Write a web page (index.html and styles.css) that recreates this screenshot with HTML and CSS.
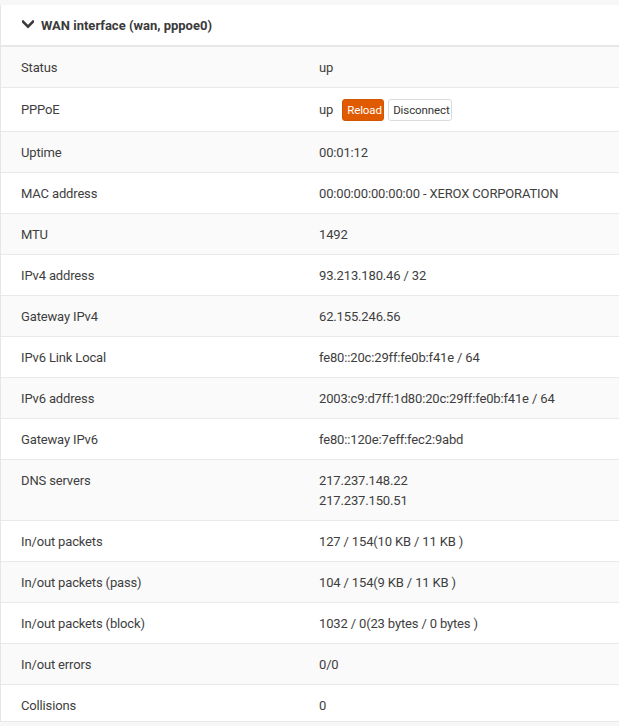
FILE: index.html
```html
<!DOCTYPE html>
<html>
<head>
<meta charset="utf-8">
<link rel="stylesheet" href="styles.css">
</head>
<body>
<section class="card">
  <header class="card-head">
    <svg class="chev" width="12" height="9" viewBox="0 0 12 9"><path d="M1 1.6 L6 6.6 L11 1.6" fill="none" stroke="#3b3b3b" stroke-width="2.6" stroke-linecap="square"/></svg>
    <span class="title">WAN interface (wan, pppoe0)</span>
  </header>
  <div class="rows">
    <div class="row"><div class="lbl">Status</div><div class="val">up</div></div>
    <div class="row row-btn"><div class="lbl">PPPoE</div><div class="val val-btn">up <span class="btns"><button class="btn btn-primary">Reload</button><button class="btn btn-default">Disconnect</button></span></div></div>
    <div class="row"><div class="lbl">Uptime</div><div class="val">00:01:12</div></div>
    <div class="row"><div class="lbl">MAC address</div><div class="val">00:00:00:00:00:00 - XEROX CORPORATION</div></div>
    <div class="row"><div class="lbl">MTU</div><div class="val">1492</div></div>
    <div class="row"><div class="lbl">IPv4 address</div><div class="val">93.213.180.46 / 32</div></div>
    <div class="row"><div class="lbl">Gateway IPv4</div><div class="val">62.155.246.56</div></div>
    <div class="row"><div class="lbl">IPv6 Link Local</div><div class="val">fe80::20c:29ff:fe0b:f41e / 64</div></div>
    <div class="row"><div class="lbl">IPv6 address</div><div class="val">2003:c9:d7ff:1d80:20c:29ff:fe0b:f41e / 64</div></div>
    <div class="row"><div class="lbl">Gateway IPv6</div><div class="val">fe80::120e:7eff:fec2:9abd</div></div>
    <div class="row"><div class="lbl">DNS servers</div><div class="val">217.237.148.22<br>217.237.150.51</div></div>
    <div class="row"><div class="lbl">In/out packets</div><div class="val">127 / 154(10 KB / 11 KB )</div></div>
    <div class="row"><div class="lbl">In/out packets (pass)</div><div class="val">104 / 154(9 KB / 11 KB )</div></div>
    <div class="row"><div class="lbl">In/out packets (block)</div><div class="val">1032 / 0(23 bytes / 0 bytes )</div></div>
    <div class="row"><div class="lbl">In/out errors</div><div class="val">0/0</div></div>
    <div class="row row-last"><div class="lbl">Collisions</div><div class="val">0</div></div>
  </div>
</section>
</body>
</html>
```
FILE: styles.css
```css
html, body {
  margin: 0;
  padding: 0;
  background: #f7f7f7;
}
body {
  padding-top: 5px;
  font-family: Roboto, "Liberation Sans", sans-serif;
  font-size: 13px;
  letter-spacing: -0.15px;
  color: #3e3e3e;
}
.card {
  background: #fff;
  border-left: 1px solid #e6e6e6;
}
.card-head {
  height: 40px;
  display: flex;
  align-items: center;
  padding-left: 21px;
  border-bottom: 2px solid #e7e7e7;
}
.chev {
  display: block;
  margin-right: 7px;
  margin-top: -1px;
}
.title {
  font-weight: 700;
  color: #3a3a3a;
  letter-spacing: 0;
}
.row {
  display: grid;
  grid-template-columns: 309px 1fr;
  border-bottom: 1px solid #e9e9e9;
  line-height: 20px;
}
.row:nth-child(odd) {
  background: #fafafa;
}
.lbl {
  padding: 11px 20px 9px;
}
.val {
  padding: 11px 9px 9px;
}
.row-btn .lbl {
  padding-top: 12px;
}
.val-btn {
  padding-top: 11px;
  padding-bottom: 10px;
  display: flex;
  align-items: center;
  line-height: 20px;
}
.btns {
  display: flex;
  gap: 4px;
  margin-left: 9px;
}
.btn {
  font-family: Roboto, "Liberation Sans", sans-serif;
  font-size: 11.5px;
  letter-spacing: -0.1px;
  height: 22px;
  line-height: 20px;
  padding: 0 4px;
  border-radius: 3px;
  margin: 0;
  cursor: pointer;
}
.btn-primary {
  background: #e05a00;
  border: 1px solid #d45500;
  color: #fff;
  width: 42px;
}
.btn-default {
  background: #fff;
  border: 1px solid #dcdcdc;
  color: #333;
  width: 64px;
}
.row-last {
  height: 36px;
  overflow: hidden;
}
```
